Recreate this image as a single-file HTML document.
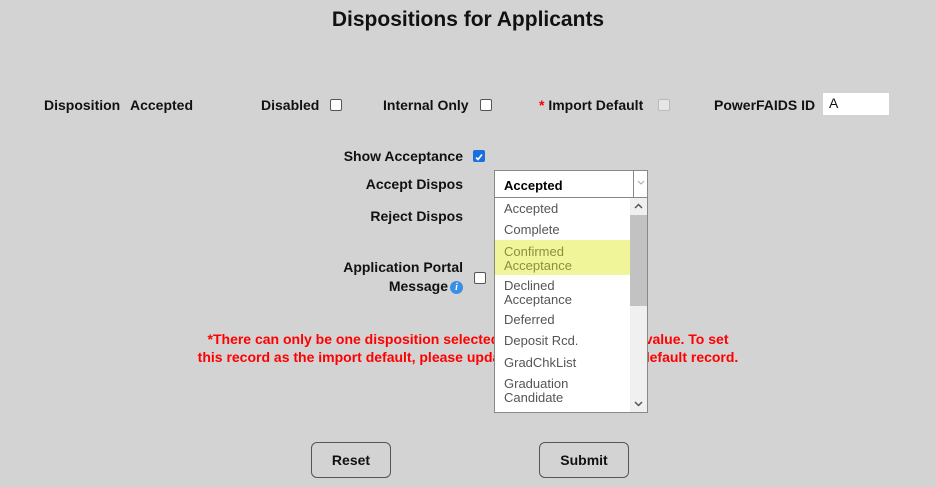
<!DOCTYPE html>
<html><head><meta charset="utf-8"><style>
body{margin:0;width:936px;height:487px;background:#d3d3d3;font-family:"Liberation Sans",sans-serif;position:relative;overflow:hidden;color:#111}
.a{position:absolute;white-space:nowrap}
.b{font-weight:bold;font-size:14px}
.r{text-align:right}
.cb{position:absolute;width:10px;height:10px;border:1px solid #555;border-radius:2px;background:#fff}
.red{color:#f00;font-weight:bold;font-size:14px;position:absolute;left:0;width:936px;text-align:center}
.opt{position:absolute;left:9px;font-size:13px;color:#555;line-height:14px}
.btn{position:absolute;top:442px;height:36px;border:1px solid #555;border-radius:6px;box-sizing:border-box;font-weight:bold;font-size:14px;text-align:center;line-height:34px}
</style></head><body>
<div class="a" style="left:0;width:936px;text-align:center;top:8px;font-size:21px;font-weight:bold">Dispositions for Applicants</div>

<div class="a b" style="left:44px;top:97px">Disposition</div>
<div class="a b" style="left:130px;top:97px">Accepted</div>
<div class="a b" style="left:261px;top:97px">Disabled</div>
<div class="cb" style="left:330px;top:99px"></div>
<div class="a b" style="left:383px;top:97px">Internal Only</div>
<div class="cb" style="left:480px;top:99px"></div>
<div class="a b" style="left:539px;top:97px"><span style="color:#f00">*</span> Import Default</div>
<div class="cb" style="left:658px;top:99px;background:#e6e6e6;border-color:#bbb"></div>
<div class="a b" style="left:714px;top:97px">PowerFAIDS ID</div>
<div class="a" style="left:823px;top:93px;width:66px;height:22px;background:#fff;font-size:14px;line-height:20px;padding-left:6px;box-sizing:border-box">A</div>

<div class="a b r" style="right:473px;top:148px">Show Acceptance</div>
<div class="a" style="left:473px;top:150px;width:12px;height:12px;background:#1a6fe0;border-radius:2px"><svg width="12" height="12"><path d="M3 6.5L5 8.5L9 3.5" stroke="#fff" stroke-width="1.6" fill="none"/></svg></div>
<div class="a b r" style="right:473px;top:176px">Accept Dispos</div>
<div class="a b r" style="right:473px;top:208px">Reject Dispos</div>
<div class="a b r" style="right:473px;top:259px">Application Portal</div>
<div class="a b r" style="right:488px;top:278px">Message</div>
<div class="a" style="left:450px;top:281px;width:13px;height:13px;border-radius:50%;background:#3a8ee6;color:#fff;font-size:10px;font-style:italic;font-weight:bold;text-align:center;line-height:13px;font-family:'Liberation Serif',serif">i</div>
<div class="cb" style="left:474px;top:272px"></div>

<div class="red" style="top:331px">*There can only be one disposition selected as the import default value. To set</div>
<div class="red" style="top:349px">this record as the import default, please update the current import default record.</div>

<div class="a" style="left:494px;top:170px;width:154px;height:28px;background:#fff;border:1px solid #888;box-sizing:border-box">
 <div class="a" style="left:9px;top:7px;font-size:13px;font-weight:bold;color:#000">Accepted</div>
 <div class="a" style="left:138px;top:0;width:1px;height:26px;background:#888"></div>
 <svg class="a" style="left:142px;top:9px" width="8" height="6"><path d="M1 1L4 4L7 1" stroke="#aaa" fill="none"/></svg>
</div>
<div class="a" style="left:494px;top:197px;width:154px;height:216px;background:#fff;border:1px solid #888;box-sizing:border-box">
 <div class="a" style="left:0;top:42px;width:135px;height:35px;background:#f0f59a"></div>
 <div class="opt" style="top:4px">Accepted</div>
 <div class="opt" style="top:25px">Complete</div>
 <div class="opt" style="top:47px;color:#8a9040">Confirmed<br>Acceptance</div>
 <div class="opt" style="top:81px">Declined<br>Acceptance</div>
 <div class="opt" style="top:115px">Deferred</div>
 <div class="opt" style="top:136px">Deposit Rcd.</div>
 <div class="opt" style="top:158px">GradChkList</div>
 <div class="opt" style="top:179px">Graduation<br>Candidate</div>
 <div class="a" style="left:135px;top:0;width:17px;height:214px;background:#f0f0f0"></div>
 <div class="a" style="left:135px;top:17px;width:17px;height:91px;background:#c2c2c2"></div>
 <svg class="a" style="left:139px;top:5px" width="9" height="6"><path d="M1 5L4.5 1.5L8 5" stroke="#555" stroke-width="1.5" fill="none"/></svg>
 <svg class="a" style="left:139px;top:203px" width="9" height="6"><path d="M1 1L4.5 4.5L8 1" stroke="#555" stroke-width="1.5" fill="none"/></svg>
</div>

<div class="btn" style="left:311px;width:80px">Reset</div>
<div class="btn" style="left:539px;width:90px">Submit</div>
</body></html>
